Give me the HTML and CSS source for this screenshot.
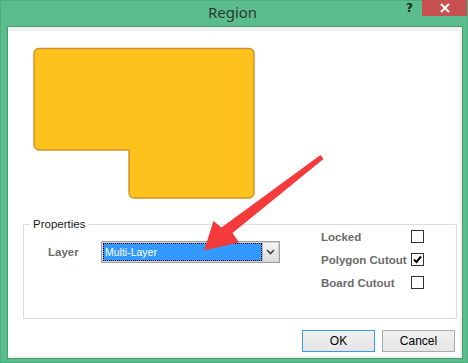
FILE: index.html
```html
<!DOCTYPE html>
<html>
	<head>
		<meta charset="UTF-8">
		<title>Region</title>
		<link rel="stylesheet" href="styles.css">
	</head>
	<body>
		<!--窗口-->
		<div class="window">
			<!--标题栏-->
			<div class="titlebar">
				<span class="title">Region</span>
				<span class="help">?</span>
				<span class="close">
					<svg width="10" height="10" viewBox="0 0 10 10"><path d="M1 1L9 9M9 1L1 9" stroke="#fff" stroke-width="2"/></svg>
				</span>
			</div>
			<!--客户区-->
			<div class="client">
				<div class="panel">
					<!--预览-->
					<svg class="preview" width="224" height="153" viewBox="0 0 224 153">
						<path d="M6 1.5H216A5 5 0 0 1 221 6.5V146A5 5 0 0 1 216 151H101A5 5 0 0 1 96 146V103H6A5 5 0 0 1 1 98V6.5A5 5 0 0 1 6 1.5Z" fill="#fdc31c" stroke="#d2902c" stroke-width="1.4"/>
					</svg>
					<!--属性-->
					<div class="group">
						<span class="group-title">Properties</span>
						<div class="layer">
							<span class="label">Layer</span>
							<div class="combo">
								<span class="combo-value">Multi-Layer</span>
								<span class="combo-btn">
									<svg width="9" height="6" viewBox="0 0 9 6"><path d="M1 1L4.5 4.5L8 1" fill="none" stroke="#444" stroke-width="1.6"/></svg>
								</span>
							</div>
						</div>
						<ul class="checks">
							<li><span class="label">Locked</span><span class="box"></span></li>
							<li><span class="label">Polygon Cutout</span><span class="box">
								<svg width="11" height="11" viewBox="0 0 11 11"><path d="M2 5.5L4.5 8L9 2.5" fill="none" stroke="#000" stroke-width="2"/></svg>
							</span></li>
							<li><span class="label">Board Cutout</span><span class="box"></span></li>
						</ul>
					</div>
					<!--按钮-->
					<div class="buttons">
						<button class="btn btn-default">OK</button>
						<button class="btn">Cancel</button>
					</div>
					<!--箭头-->
					<svg class="arrow" width="468" height="363" viewBox="0 0 468 363">
						<path d="M319.5 154L322.5 158L231.5 232L238 241.5L203 249.5L212.5 220L220.5 226.5Z" fill="#f43a3a"/>
					</svg>
				</div>
			</div>
		</div>
	</body>
</html>
```

FILE: styles.css
```css
* {
	margin: 0;
	padding: 0;
	box-sizing: border-box;
}
body {
	width: 468px;
	height: 363px;
	overflow: hidden;
	font-family: "Liberation Sans", Arial, sans-serif;
}
.window {
	width: 468px;
	height: 363px;
	background: #5abd8b;
	border: 1px solid #4fae7e;
	position: relative;
	padding: 0 4px 4px 6px;
}
.titlebar {
	height: 25px;
	display: flex;
	align-items: flex-start;
	position: relative;
}
.title {
	flex: 1;
	text-align: center;
	font-family: "Noto Sans", sans-serif;
	font-size: 15px;
	line-height: 22px;
	color: #2b3a33;
	padding-left: 52px;
}
.help {
	font-family: "DejaVu Sans", sans-serif;
	font-weight: bold;
	font-size: 12px;
	line-height: 13px;
	margin-top: 1px;
	color: #1c2a23;
	width: 16px;
}
.close {
	width: 45px;
	height: 16px;
	margin-top: -1px;
	margin-right: -4px;
	background: #c75050;
	display: flex;
	align-items: center;
	justify-content: center;
}
.client {
	height: 333px;
	border: 1px solid #479c70;
	background: #f0f0f0;
	padding: 4px 2px 2px 0;
}
.panel {
	height: 100%;
	background: #fff;
	padding: 16px 0 0 25px;
}
.preview {
	display: block;
}
.group {
	position: relative;
	width: 434px;
	height: 95px;
	margin: 24px 0 0 -10px;
	border: 1px solid #dcdcdc;
	display: flex;
	font-size: 11.5px;
}
.group-title {
	position: absolute;
	top: -8px;
	left: 6px;
	background: #fff;
	padding: 0 3px;
	font-size: 11.5px;
	line-height: 14px;
	color: #1a1a1a;
}
.label {
	font-weight: bold;
	color: #6b6b6b;
}
.layer {
	display: flex;
	align-items: center;
	padding: 16px 0 0 24px;
	align-self: flex-start;
}
.layer .label {
	width: 53px;
}
.combo {
	width: 179px;
	height: 22px;
	border: 1px solid #a0a0a0;
	box-shadow: inset 0 0 0 1px #d4d4d4;
	padding: 1px;
	display: flex;
	background: #fff;
}
.combo-value {
	flex: 1;
	background: #3399ff;
	color: #fff;
	font-size: 10.5px;
	line-height: 18px;
	padding-left: 2px;
	outline: 1px dotted #000;
	outline-offset: -1px;
}
.combo-btn {
	width: 16px;
	background: linear-gradient(#f3f3f3, #dedede);
	border-left: 1px solid #b5b5b5;
	display: flex;
	align-items: center;
	justify-content: center;
}
.checks {
	list-style: none;
	margin-left: 41px;
}
.checks li {
	height: 23px;
	display: flex;
	align-items: center;
}
.checks .label {
	width: 90px;
}
.box {
	width: 13px;
	height: 13px;
	border: 1px solid #333;
	background: #fff;
	display: flex;
	align-items: center;
	justify-content: center;
}
.buttons {
	display: flex;
	justify-content: flex-end;
	gap: 7px;
	margin: 11px 5px 0 0;
}
.btn {
	width: 73px;
	height: 22px;
	border: 1px solid #acacac;
	background: linear-gradient(#f0f0f0, #e5e5e5);
	font-family: "Liberation Sans", Arial, sans-serif;
	font-size: 12px;
	color: #000;
}
.btn-default {
	border-color: #3c9be8;
}
.arrow {
	position: absolute;
	left: 0;
	top: 0;
	pointer-events: none;
}
```
